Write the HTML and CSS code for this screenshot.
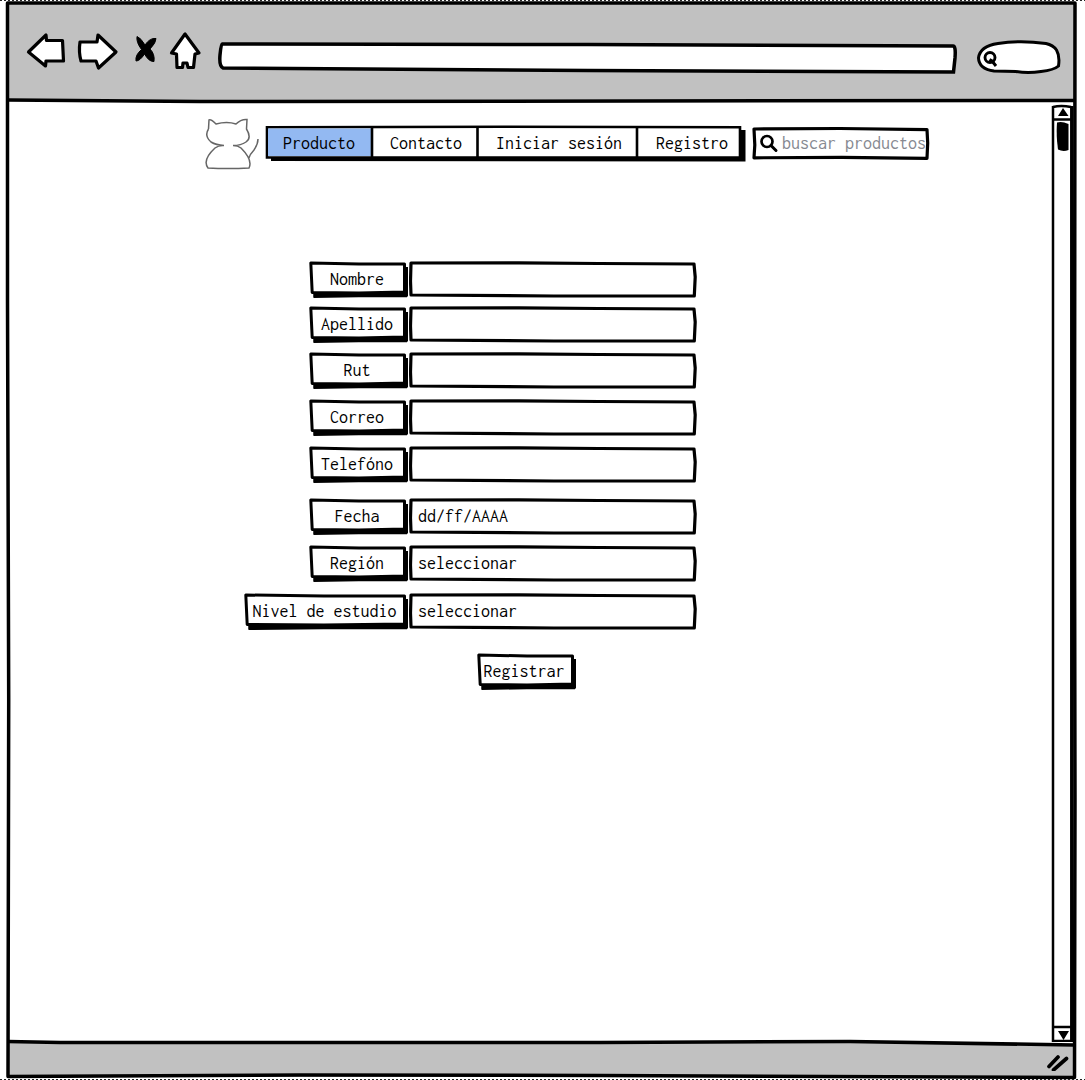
FILE: index.html
```html
<!DOCTYPE html>
<html lang="es">
<head>
<meta charset="utf-8">
<title>Registro</title>
<link rel="stylesheet" href="styles.css">
</head>
<body>
<svg class="defs" width="0" height="0">
  <symbol id="label" viewBox="0 0 100 37" preserveAspectRatio="none">
    <path d="M4.500 6H99V35.500L50 36L4.500 37Z" fill="#000"/>
    <path d="M1.800 2L50 3L95.500 3V31L50 32L3.200 31.500Z" fill="#fff" stroke="#000" stroke-width="3" stroke-linejoin="round"/>
    <path d="M4.500 34.500L50 34.500H98" stroke="#000" stroke-width="3.600"/>
  </symbol>
  <symbol id="label-wide" viewBox="0 0 165 37" preserveAspectRatio="none">
    <path d="M4.500 6H164V35.500L80 36L4.500 37Z" fill="#000"/>
    <path d="M1.800 2L80 3L160.500 3V31L80 32L3.200 31.500Z" fill="#fff" stroke="#000" stroke-width="3" stroke-linejoin="round"/>
    <path d="M4.500 34.500H163" stroke="#000" stroke-width="3.600"/>
  </symbol>
  <symbol id="field" viewBox="0 0 288 37" preserveAspectRatio="none">
    <path d="M2 2L110 1.900L190 2.500L285 3L286.200 16L285.300 34.800L145 35L2 34L1.500 20Z" fill="#fff" stroke="#000" stroke-width="3.200" stroke-linejoin="round"/>
  </symbol>
</svg>
<div class="window">
  <svg class="frame" viewBox="0 0 1085 1080">
    <path d="M8 3H1074V101H9Z" fill="#c1c1c1"/>
    <path d="M8 1042L500 1042L850 1041.500L1074 1045V1077H8Z" fill="#c1c1c1"/>
    <g fill="none" stroke="#000" stroke-width="3.500">
      <path d="M7.500 3H1075L1074.500 500L1075 800L1074.500 1077.500L600 1075.500L300 1075L8 1076.500L8.700 700L7.500 300Z" stroke-linejoin="round"/>
      <path d="M8 100L200 101.500L1074 100.500"/>
      <path d="M8 1041.500L60 1042.500H600L850 1041.500L1074 1045"/>
    </g>
    <path d="M0 .5H1085M0 1079.500H1085" stroke="#222" stroke-dasharray="2 2"/>
  </svg>
  <header class="toolbar">
    <svg class="tools" viewBox="0 0 218 102">
      <g fill="#fff" stroke="#000" stroke-width="3.200" stroke-linejoin="round">
        <path d="M28.500 52L46 35L46.500 40.500L62.500 40.500L63.500 61H46L45.500 66Z"/>
        <path d="M80 42L97 42L98 35L116 52L98.500 68L96 61L81 61Q78.500 52 80 42Z"/>
        <path d="M185 34L171.500 53L176.500 54L177 67.500H182.500L183 63H187L188 67.500H193.500L195 54L199 53Z"/>
      </g>
      <path d="M137 36.500Q141 38 145 45Q150 37.500 156 38.500Q156 43 150 49Q155 54 154 61.500Q149 62 144.500 54Q140 61 136 61Q135 55 141.500 49.500Q136 42 137 36.500Z" stroke="#000"/>
    </svg>
    <svg class="address" viewBox="0 0 742 102">
      <path d="M4 44L370 44.500L735 46Q738 46 737 58L735.500 72L370 70.500L5 68Q1 66 2 55Q3 44 4 44Z" fill="#fff" stroke="#000" stroke-width="3.500"/>
    </svg>
    <svg class="lookup" viewBox="0 0 90 102">
      <path d="M22 43.500Q44 40 70 43.500Q77 45 80.500 50Q84 56 82.500 66Q78 70 65 71.500Q52 73.500 40 71.500L18 71Q3 69 2.500 58Q4 46 22 43.500Z" fill="#fff" stroke="#000" stroke-width="3"/>
      <circle cx="14" cy="57.500" r="5" fill="none" stroke="#000" stroke-width="2.900"/>
      <path d="M13.500 59.500L16 61L20 66" stroke="#000" stroke-width="3" fill="none"/>
    </svg>
  </header>
  <main class="content">
    <div class="page">
      <nav class="nav">
        <svg class="cat" viewBox="0 0 57 54" fill="none" stroke="#666" stroke-width="1.500">
          <path d="M4.500 11L5 2Q7 1 12 6Q23 3 32 6Q37 1 43 1.500L42.500 11Q48 20 42 24Q37 27.500 29 27.500Q34 27.500 37 30Q49 42 45 50Q24 51 4 50Q-2 42 11 30Q15 27 20 27.500Q12 27 7 24Q0 18 4.500 11M44.500 41Q46 36 50 32Q54 26 54 21"/>
        </svg>
        <div class="tabs">
          <svg class="shape" viewBox="0 0 480 38">
            <path d="M6 31H475V5H480.500V36.500L6 36Z"/>
            <path d="M2 2.200L240 1.800L475 2.200V32.500H2Z" fill="#fff" stroke="#000" stroke-width="2.600"/>
            <path d="M3 3.500H107V31H3Z" fill="#93b9f2"/>
            <path d="M107 2V33M212.500 2V33M372 2V33" stroke="#000" stroke-width="2.600"/>
          </svg>
          <a class="tab producto">Producto</a><a class="tab contacto">Contacto</a><a class="tab sesion">Iniciar sesión</a><a class="tab registro">Registro</a>
        </div>
        <div class="search">
          <svg class="shape" viewBox="0 0 177 34">
            <path d="M2 2L88 1.500L175 2.700L175.700 16L175 31.300L90 30.300L2 30.800L2.800 18Z" fill="#fff" stroke="#000" stroke-width="3.200" stroke-linejoin="round"/>
            <circle cx="15" cy="14.500" r="5.500" fill="none" stroke="#000" stroke-width="2.700"/>
            <path d="M19 18.500L24 23.500" stroke="#000" stroke-width="3" stroke-linecap="round"/>
          </svg>
          <span>buscar productos</span>
        </div>
      </nav>
      <form class="form">
        <div class="row r1"><label class="label"><svg class="shape"><use href="#label"/></svg><span>Nombre</span></label><div class="field"><svg class="shape"><use href="#field"/></svg></div></div>
        <div class="row r2"><label class="label"><svg class="shape"><use href="#label"/></svg><span>Apellido</span></label><div class="field"><svg class="shape"><use href="#field"/></svg></div></div>
        <div class="row r3"><label class="label"><svg class="shape"><use href="#label"/></svg><span>Rut</span></label><div class="field"><svg class="shape"><use href="#field"/></svg></div></div>
        <div class="row r4"><label class="label"><svg class="shape"><use href="#label"/></svg><span>Correo</span></label><div class="field"><svg class="shape"><use href="#field"/></svg></div></div>
        <div class="row r5"><label class="label"><svg class="shape"><use href="#label"/></svg><span>Telefóno</span></label><div class="field"><svg class="shape"><use href="#field"/></svg></div></div>
        <div class="row r6"><label class="label"><svg class="shape"><use href="#label"/></svg><span>Fecha</span></label><div class="field"><svg class="shape"><use href="#field"/></svg><span>dd/ff/AAAA</span></div></div>
        <div class="row r7"><label class="label"><svg class="shape"><use href="#label"/></svg><span>Región</span></label><div class="field"><svg class="shape"><use href="#field"/></svg><span>seleccionar</span></div></div>
        <div class="row r8"><label class="label wide"><svg class="shape"><use href="#label-wide"/></svg><span>Nivel de estudio</span></label><div class="field"><svg class="shape"><use href="#field"/></svg><span>seleccionar</span></div></div>
        <div class="label submit"><svg class="shape"><use href="#label"/></svg><span>Registrar</span></div>
      </form>
    </div>
    <svg class="scroll" viewBox="0 0 24 940">
      <g fill="none" stroke="#000" stroke-width="2.500">
        <path d="M2 5Q10 3 20 5M2 4V939H20M2 17.500H20M2 925H20"/>
        <path d="M20.800 4V940" stroke-width="3.500"/>
      </g>
      <path d="M7 14L12 6L17.500 14ZM7 929H18L12.500 938Z"/>
      <path d="M6 20.500Q11 19 17.500 22L17.500 48Q12 50 7 47.500Q5 33 6 20.500Z"/>
    </svg>
  </main>
  <footer class="status">
    <svg class="grip" viewBox="0 0 26 20"><path d="M4 15.500L13 6M8.500 19L21.500 7.500" stroke="#000" stroke-width="3.700" stroke-linecap="round"/></svg>
  </footer>
</div>
</body>
</html>
```
FILE: styles.css
```css
body {
  margin: 0;
  background: #fff;
  color: #000;
  font: 18px/20px "Inconsolata", "Noto Sans Mono CJK JP", "Liberation Mono", monospace;
}
svg { display: block; }
.defs { position: absolute; }
.window {
  position: relative;
  display: flex;
  flex-direction: column;
  width: 1085px;
  height: 1080px;
  overflow: hidden;
}
.frame { position: absolute; inset: 0; width: 1085px; height: 1080px; }
.toolbar { position: relative; display: flex; height: 102px; flex: none; }
.tools { width: 218px; }
.address { width: 742px; }
.lookup { width: 90px; margin-left: 16px; }
.content { position: relative; display: flex; height: 940px; flex: none; }
.page { width: 1051px; }
.scroll { width: 24px; height: 940px; }
.nav { display: flex; height: 54px; padding: 16px 0 0 204px; }
.cat { width: 57px; height: 54px; }
.tabs { position: relative; display: flex; width: 480px; height: 38px; margin: 7px 0 0 4px; }
.shape { position: absolute; inset: 0; width: 100%; height: 100%; z-index: -1; overflow: visible; }
.tabs, .search, .label, .field { isolation: isolate; line-height: 20px; white-space: nowrap; }
.tab { padding-top: 8px; text-align: center; box-sizing: border-box; }
.producto { width: 108px; }
.contacto { width: 106px; }
.sesion { width: 160px; }
.registro { width: 106px; }
.search { position: relative; width: 177px; height: 34px; margin: 9px 0 0 7px; color: #868991; }
.search span { display: block; padding: 6px 0 0 30px; }
.form { display: flex; flex-direction: column; padding-top: 89px; }
.row { display: flex; justify-content: flex-end; width: 697px; height: 37px; }
.label { position: relative; width: 100px; height: 37px; text-align: center; }
.label span { display: block; padding: 8px 4px 0 0; }
.wide { width: 165px; }
.field { position: relative; width: 288px; height: 37px; }
.field span { display: block; padding: 8px 0 0 9px; }
.r2 { margin-top: 8px; }
.r3 { margin-top: 9px; }
.r4, .r5, .r7 { margin-top: 10px; }
.r6 { margin-top: 15px; }
.r8 { margin-top: 11px; }
.submit { margin: 23px 0 0 477px; }
.submit span { padding-right: 6px; }
.status { position: relative; display: flex; justify-content: flex-end; align-items: center; height: 38px; padding-right: 14px; }
.grip { width: 26px; height: 20px; }
```
